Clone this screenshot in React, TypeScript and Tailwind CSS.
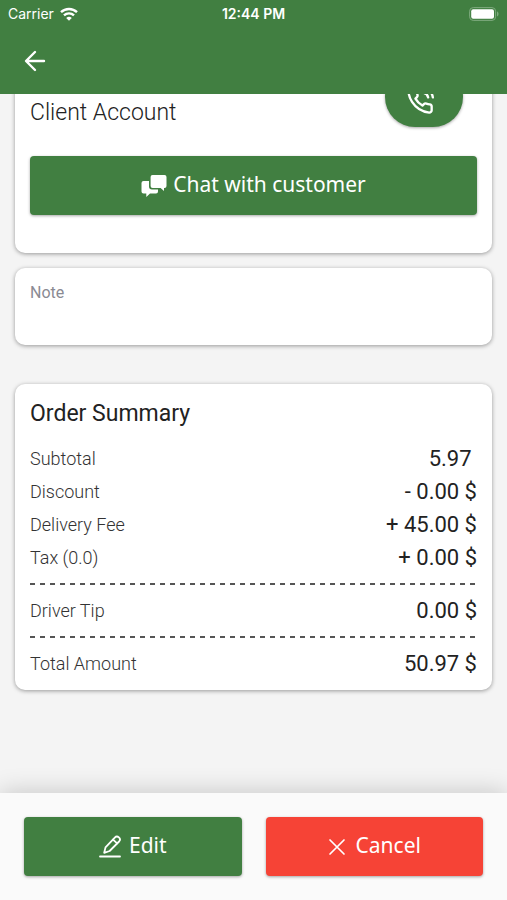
import React from "react"
import { FiPhoneCall } from "react-icons/fi"

interface SummaryItem {
    label: string;
    value: string;
    divider?: boolean;
}

const items: SummaryItem[] = [
    { label: "Subtotal", value: "5.97\u00a0" },
    { label: "Discount", value: "- 0.00 $" },
    { label: "Delivery Fee", value: "+ 45.00 $" },
    { label: "Tax (0.0)", value: "+ 0.00 $" },
    { label: "Driver Tip", value: "0.00 $", divider: true },
    { label: "Total Amount", value: "50.97 $", divider: true },
]

const cardClass = "rounded-[10px] bg-white shadow-[0_1px_4px_rgba(0,0,0,0.38)]"
const buttonClass = "flex h-[59px] items-center justify-center rounded font-['Noto_Sans',sans-serif] text-[21px] text-white shadow-[0_1px_3px_rgba(0,0,0,0.35)] cursor-pointer"

function BackIcon() {
    return (
        <svg width="22" height="22" viewBox="0 0 22 22" fill="none" stroke="#fff" strokeWidth="2.4" strokeLinecap="round" strokeLinejoin="round" aria-hidden="true">
            <path d="M11 2 2 11l9 9M2.500 11H20" />
        </svg>
    )
}

function WifiIcon() {
    return (
        <svg width="18" height="14" viewBox="0 0 18 14" fill="none" stroke="#fff" strokeWidth="2.4" aria-hidden="true">
            <path d="M1 5.2a11.5 11.5 0 0 1 16 0" />
            <path d="M4 8.400a7.200 7.200 0 0 1 10 0" />
            <path d="M9 13.800 6.200 11a4 4 0 0 1 5.600 0z" fill="#fff" stroke="none" />
        </svg>
    )
}

function BatteryIcon() {
    return (
        <svg width="30" height="14" viewBox="0 0 30 14" aria-hidden="true">
            <rect x="0.600" y="0.600" width="26" height="12.800" rx="3.600" fill="none" stroke="#7eaa7e" />
            <rect x="2.200" y="2.200" width="22.800" height="9.600" rx="2" fill="#fff" />
            <path d="M28 4.600c2 .6 2 4.200 0 4.800z" fill="#7eaa7e" />
        </svg>
    )
}

function ChatIcon() {
    return (
        <svg width="26" height="24" viewBox="0 0 26 24" fill="#fff" aria-hidden="true">
            <path d="M11.500 1h12A2 2 0 0 1 25.500 3v9a2 2 0 0 1-2 2h-.5v3l-3.400-3h-8a2 2 0 0 1-2-2V3a2 2 0 0 1 1.900-2z" />
            <path d="M2.500 7H8v5.500a3 3 0 0 0 3 3h6V17.500a2 2 0 0 1-2 2H9L5.300 23v-3.500H2.500a2 2 0 0 1-2-2V9a2 2 0 0 1 2-2z" />
        </svg>
    )
}

function EditIcon() {
    return (
        <svg width="22" height="24" viewBox="0 0 22 24" fill="none" stroke="#fff" strokeWidth="1.8" strokeLinecap="round" strokeLinejoin="round" aria-hidden="true">
            <path d="M5.200 17.800 6.500 12.400 15.800 2.600a2.900 2.900 0 0 1 4.300 3.900L10.600 16z" />
            <path d="m14 4.600 4.200 3.800" />
            <path d="M1 21.500h20" />
        </svg>
    )
}

function CloseIcon() {
    return (
        <svg width="18" height="18" viewBox="0 0 18 18" fill="none" stroke="#fff" strokeWidth="1.7" strokeLinecap="round" aria-hidden="true">
            <path d="m2 2 14 14M16 2 2 16" />
        </svg>
    )
}

function DashedLine() {
    return <div className="my-[9px] h-0.5 bg-[repeating-linear-gradient(to_right,#555_0_5px,transparent_5px_10px)]" />
}

export default function App() {
    const [note, setNote] = React.useState("")

    return (
        <div className="flex h-screen flex-col bg-[#f4f4f4] font-[Roboto,sans-serif] text-[#222]">
            <header className="bg-[#417f41] text-white">
                <div className="grid h-7 grid-cols-3 items-center px-2 font-[Inter,sans-serif] text-sm">
                    <div className="flex items-center gap-1.5">
                        Carrier
                        <WifiIcon />
                    </div>
                    <span className="text-center font-semibold whitespace-nowrap">12:44 PM</span>
                    <div className="flex justify-end">
                        <BatteryIcon />
                    </div>
                </div>
                <div className="flex h-[66px] items-center px-6">
                    <button type="button" aria-label="Back" className="cursor-pointer">
                        <BackIcon />
                    </button>
                </div>
            </header>

            <main className="min-h-0 flex-1 overflow-hidden px-[15px]">
                <section className={`-mt-[27px] px-[15px] pb-[38px] ${cardClass}`}>
                    <div className="flex items-end justify-between pr-[14px]">
                        <h2 className="text-[23px] leading-7 font-light">Client Account</h2>
                        <button type="button" aria-label="Call client" className="flex h-[60px] w-[78px] items-center justify-center rounded-full bg-[#417f41] pt-2 pr-2 text-white shadow-[0_1px_3px_rgba(0,0,0,0.35)] cursor-pointer">
                            <FiPhoneCall size={28} strokeWidth={2} />
                        </button>
                    </div>
                    <button type="button" className={`mt-[29px] w-full gap-1.5 bg-[#417f41] ${buttonClass}`}>
                        <ChatIcon />
                        <span className="pb-0.5">Chat with customer</span>
                    </button>
                </section>

                <section className={`mt-[15px] px-[15px] pt-3 pb-[13px] ${cardClass}`}>
                    <textarea
                        aria-label="Note"
                        placeholder="Note"
                        rows={2}
                        value={note}
                        onChange={(e) => setNote(e.target.value)}
                        className="block w-full resize-none text-base leading-[26px] outline-none placeholder:text-[#8a8a93]"
                    />
                </section>

                <section className={`mt-[39px] px-[15px] pt-[14px] pb-2.5 ${cardClass}`}>
                    <h2 className="mb-3 text-[23px] leading-8 text-[#222]">Order Summary</h2>
                    <dl>
                        {items.map((item) => (
                            <div key={item.label}>
                                {item.divider && <DashedLine />}
                                <div className="flex h-[33px] items-center justify-between">
                                    <dt className="text-lg font-light text-[#333]">{item.label}</dt>
                                    <dd className="text-[22px]">{item.value}</dd>
                                </div>
                            </div>
                        ))}
                    </dl>
                </section>
            </main>

            <footer className="grid grid-cols-2 gap-6 bg-[#fafafa] p-6 shadow-[0_0_24px_rgba(0,0,0,0.2)]">
                <button type="button" className={`gap-2 bg-[#417f41] ${buttonClass}`}>
                    <EditIcon />
                    <span className="pb-0.5">Edit</span>
                </button>
                <button type="button" className={`gap-2.5 bg-[#f64336] ${buttonClass}`}>
                    <CloseIcon />
                    <span className="pb-0.5">Cancel</span>
                </button>
            </footer>
        </div>
    )
}
